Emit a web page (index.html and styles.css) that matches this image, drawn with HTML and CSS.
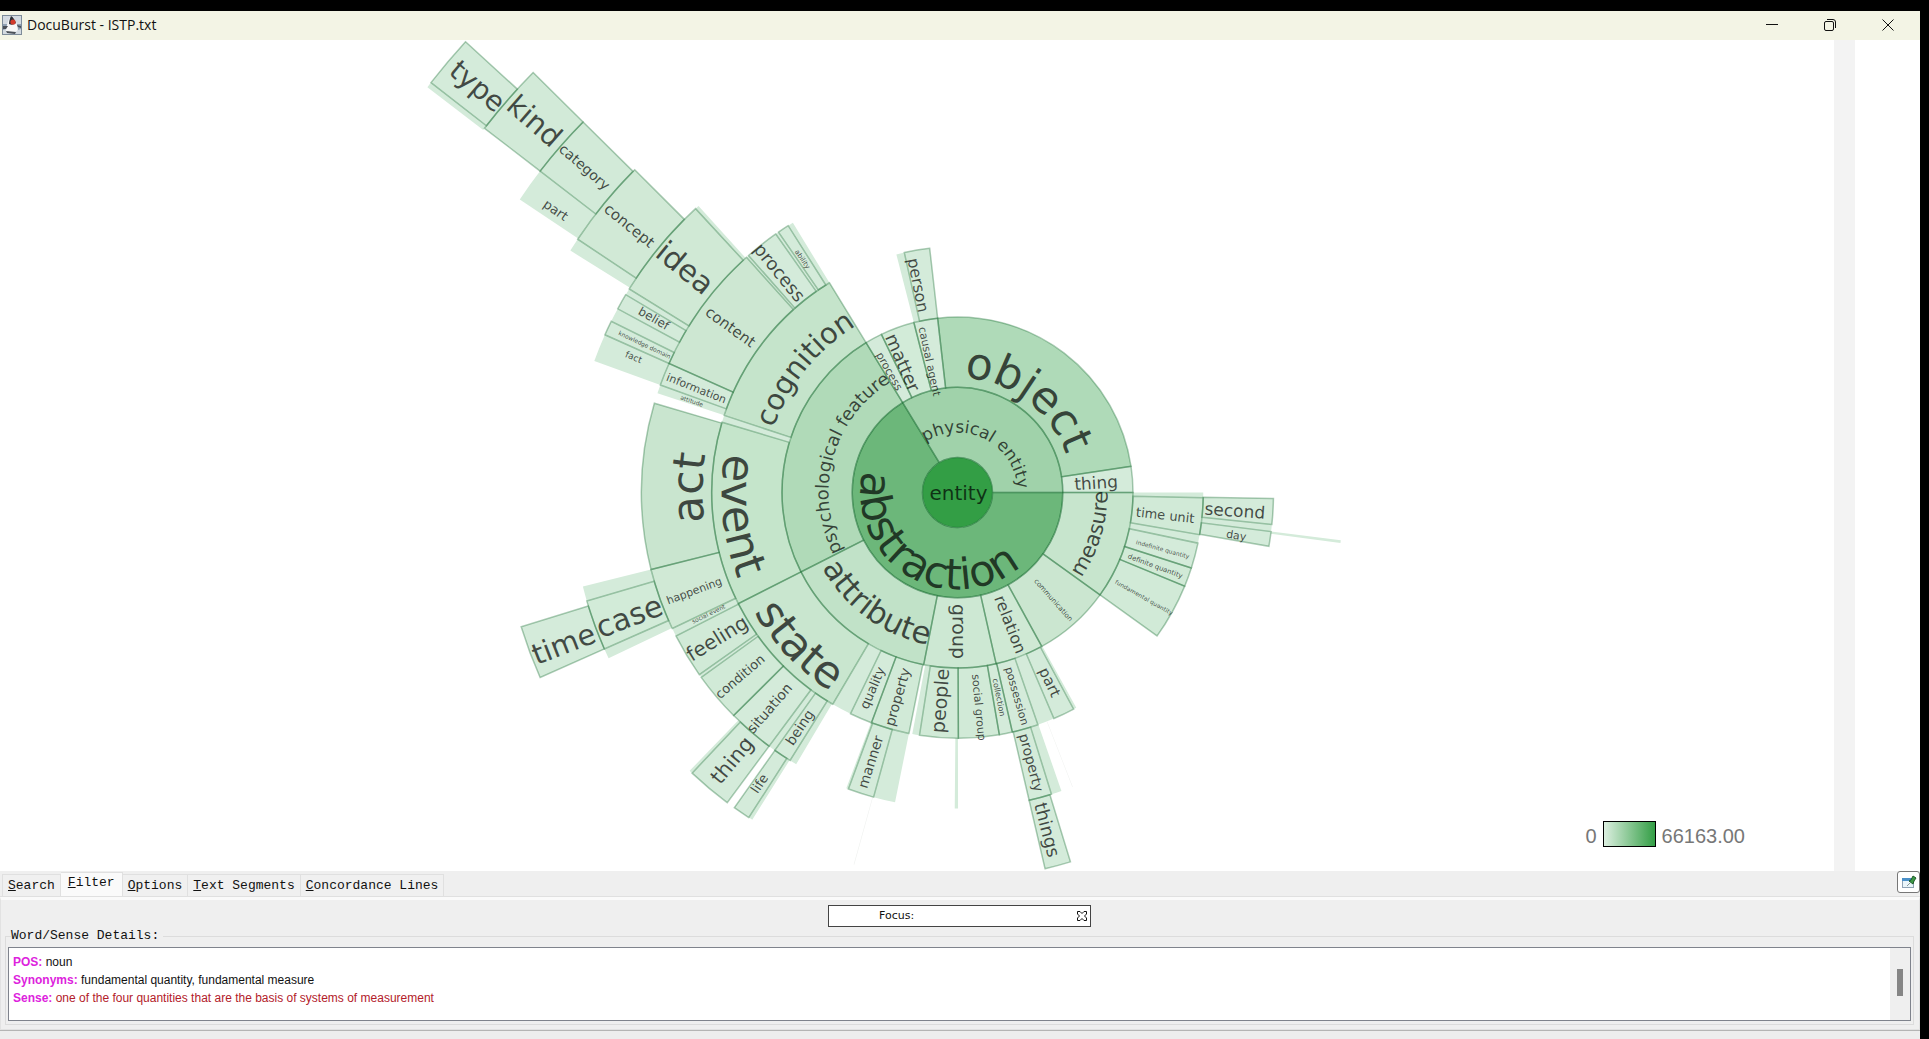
FILE: index.html
```html
<!DOCTYPE html>
<html lang="en">
<head>
<meta charset="utf-8">
<title>DocuBurst - ISTP.txt</title>
<link rel="stylesheet" href="styles.css">
</head>
<body>
<div class="window">
  <header class="titlebar">
    <svg class="app-icon" viewBox="0 0 20 20" aria-hidden="true">
      <rect x="0.5" y="0.5" width="19" height="19" fill="#d3dae1" stroke="#7d8b99"/>
      <path d="M1 9h6l-3 5-3 1zM14 9h5v5l-3 1z" fill="#8fa0b2"/>
      <path d="M9 1c3 1 5 5 6 9 1 3 1 5 0 6-2 2-8 3-11 1 0-5 2-12 5-16z" fill="#f7f7f7"/>
      <path d="M9 1c-1 2-2 5-2 8 2 1 5 1 7-1-1-3-3-6-5-7z" fill="#2b2f36"/>
      <path d="M1 11l5 0-2 3-3 0zM15 10l4 1 0 2-3-1zM4 16l10 1-1 2-8-1z" fill="#4a5058"/>
      <circle cx="11" cy="7" r="2.6" fill="#d33a2c"/>
    </svg>
    <h1 class="title">DocuBurst - ISTP.txt</h1>
    <div class="window-buttons">
      <button class="window-button" aria-label="Minimize"><svg viewBox="0 0 14 14"><path d="M1 6.500h12" /></svg></button>
      <button class="window-button" aria-label="Restore"><svg viewBox="0 0 14 14"><rect x="1.500" y="3.500" width="9" height="9" rx="1.500"/><path d="M4 1.500h6a2.500 2.500 0 0 1 2.500 2.500v6"/></svg></button>
      <button class="window-button" aria-label="Close"><svg viewBox="0 0 14 14"><path d="M1.500 1.500l11 11M12.500 1.500l-11 11"/></svg></button>
    </div>
  </header>

  <main class="stage">
    <div class="canvas">
      <svg id="burst" class="burst" viewBox="0 40 1834 831" role="img" aria-label="Word sunburst">
        <g id="sectors"></g>
        <g id="labels"></g>
      </svg>
      <div class="legend"><span>0</span><span class="legend-ramp"></span><span>66163.00</span></div>
    </div>
    <div class="track"></div>
    <div class="margin"></div>
  </main>

  <section class="panel">
    <div class="tab-row">
      <div class="tabs" role="tablist">
        <button class="tab" role="tab"><u>S</u>earch</button>
        <button class="tab tab-active" role="tab" aria-selected="true"><u>F</u>ilter</button>
        <button class="tab" role="tab"><u>O</u>ptions</button>
        <button class="tab" role="tab"><u>T</u>ext Segments</button>
        <button class="tab" role="tab"><u>C</u>oncordance Lines</button>
      </div>
      <button class="pin" aria-label="Detach panel">
        <svg viewBox="0 0 16 16">
          <rect x="1.500" y="4.500" width="11" height="9" fill="#eaf5fa" stroke="#8fa3b5"/>
          <rect x="1" y="4" width="12" height="3" fill="#4a90c8"/>
          <path d="M6 12l3-3" stroke="#8a9a9a"/>
          <path d="M8 7l2-1 2-4 3 2-2 3-1 3z" fill="#3d9a45" stroke="#1f5a2a"/>
        </svg>
      </button>
    </div>
    <div class="tab-body">
      <div class="focus">
        <label for="focus">Focus:</label>
        <input id="focus" type="text">
        <button class="clear" aria-label="Clear focus"><svg viewBox="0 0 12 12"><path d="M1.500 1.500h2.500l2 2 2-2h2.500v2.500l-2 2 2 2v2.500h-2.500l-2-2-2 2h-2.500v-2.500l2-2-2-2z"/></svg></button>
      </div>
      <fieldset class="details">
        <legend>Word/Sense Details:</legend>
        <div class="details-box">
          <div class="details-text">
            <p><b>POS:</b> noun</p>
            <p><b>Synonyms:</b> fundamental quantity, fundamental measure</p>
            <p class="sense"><b>Sense:</b> one of the four quantities that are the basis of systems of measurement</p>
          </div>
          <div class="scrollbar"><span class="thumb"></span></div>
        </div>
      </fieldset>
    </div>
    <footer class="status"></footer>
  </section>
</div>
<script src="burst.js"></script>
</body>
</html>
```

FILE: styles.css
```css
* { box-sizing: border-box; }

body {
  margin: 0;
  min-height: 100vh;
  display: flex;
  flex-direction: column;
  padding: 11px 9px 0 0;
  background: #000;
  color: #111;
  font-family: "Liberation Sans", Arial, sans-serif;
}

button { margin: 0; padding: 0; border: 0; background: none; font: inherit; color: inherit; }

.window { flex: 1; display: flex; flex-direction: column; background: #fff; }

.titlebar { display: flex; align-items: center; height: 29px; padding: 0 15px 2px 2px; background: #f3f4e5; }
.app-icon { width: 20px; height: 20px; margin-right: 5px; }
.title { margin: 0; font: 400 14px/20px "Open Sans", "Noto Sans", sans-serif; color: #111; }
.window-buttons { margin-left: auto; display: flex; gap: 24px; }
.window-button { width: 34px; height: 26px; display: grid; place-items: center; }
.window-button svg { width: 14px; height: 14px; fill: none; stroke: #111; }

.stage { flex: 1; display: flex; min-height: 0; }
.canvas { position: relative; flex: 1; min-width: 0; overflow: hidden; }
.burst { position: absolute; inset: 0; width: 100%; height: 100%; }
.track { width: 21px; background: #f3f3f3; }
.margin { width: 65px; }

.legend {
  position: absolute;
  right: 89px;
  bottom: 20px;
  display: flex;
  align-items: center;
  gap: 6px;
  font-size: 20px;
  line-height: 28px;
  color: #777;
}
.legend-ramp { width: 53px; height: 26px; margin-bottom: 4px; border: 1px solid #000; background: linear-gradient(90deg, #dcefe0, #339e45); }

.sector { fill: #d4ebda; }
.sector.line { stroke: rgb(20 105 45 / 35%); stroke-width: 1.5; }
.sector.hair { fill: #f0f2f0; }
.word { font-family: "DejaVu Sans", Verdana, sans-serif; fill: rgb(0 0 0 / 70%); text-anchor: middle; }

.panel { background: #efefef; }
.tab-row { display: flex; align-items: flex-end; height: 26px; padding-left: 2px; border-bottom: 1px solid #e0e0e0; }
.tabs { display: flex; align-items: flex-end; flex: 1; }
.tab {
  height: 22px;
  padding: 0 5px;
  border: 1px solid #e0e0e0;
  border-width: 1px 1px 0 0;
  background: #f0f0f0;
  font: 13px/20px "Liberation Mono", monospace;
}
.tab:first-child { border-left-width: 1px; }
.tab-active { height: 24px; padding: 0 7px 3px; background: #fafafa; }
.pin {
  width: 23px;
  height: 22px;
  margin-bottom: 3px;
  border: 1px solid #777;
  border-radius: 3px;
  background: #fff;
  display: grid;
  place-items: center;
}
.pin svg { width: 16px; height: 16px; }

.tab-body { padding: 5px 5px 4px 4px; border: 1px solid #e2e2e2; border-width: 0 1px 1px; border-top: 3px solid #fafafa; }
.focus {
  display: flex;
  align-items: center;
  width: 263px;
  height: 22px;
  margin: 0 auto;
  padding: 0 2px 0 50px;
  border: 1px solid #444;
  background: #fff;
  font: 11px/20px "DejaVu Sans", Verdana, sans-serif;
}
.focus input { flex: 1; min-width: 0; height: 18px; border: 0; padding: 0 4px; background: none; font: inherit; }
.clear { width: 12px; height: 16px; }
.clear svg { display: block; width: 12px; height: 12px; fill: #fff; stroke: #111; }

.details { margin: 0; padding: 2px 2px 3px; border: 1px solid #dcdcdc; }
.details legend { margin-left: 3px; padding: 0 4px 0 0; font: 13px/18px "Liberation Mono", monospace; }
.details-box { display: flex; height: 74px; border: 1px solid #7f838c; background: #fff; }
.details-text { flex: 1; padding: 5px 4px; font-size: 12px; line-height: 18px; color: #111; }
.details-text p { margin: 0; }
.details-text b { color: #dd22dd; }
.details-text .sense { color: #b3202a; }
.scrollbar { width: 20px; padding: 21px 7px; background: #efefef; }
.thumb { display: block; width: 6px; height: 27px; background: #868686; }

.status { height: 9px; border-top: 1px solid #b4b4b4; background: #ededed; }
```

FILE: burst.js
```js
// Radial word tree: every ring has the same depth, angles run counterclockwise from east.
const CX = 957.5, CY = 492.5, CORE = 35, RING = 70.25;
const NS = "http://www.w3.org/2000/svg";

// [ring, from, to, fill or null for the lightest tint, kind]; kind: 1 outlined, 0 plain, 2 hairline
const sectors = [
  [1, 0, 121.4, "#a0d2aa", 1], [1, 121.4, 360, "#6cb77a", 1],
  [2, 0, 8.6, null, 1], [2, 8.6, 96.5, "#afdab8", 1], [2, 96.5, 104.4, null, 1],
  [2, 104.4, 115.7, "#d2ebd8", 1], [2, 115.7, 121.4, null, 1],
  [2, 121.4, 206.9, "#b0dab8", 1], [2, 206.9, 258.9, "#c1e2c8", 1],
  [2, 258.9, 282.7, "#cde8d3", 1], [2, 282.7, 298.7, "#cfe9d4", 1],
  [2, 298.7, 324.3, "#cbe6d0", 1], [2, 324.3, 360, "#c7e5cd", 1],
  [3, 96.5, 102.5, null, 1], [3, 102.5, 104.4, null, 0],
  [3, 121.4, 161.7, "#c5e4cb", 1], [3, 161.7, 163.4, null, 0],
  [3, 163.4, 206.9, "#c5e5cb", 1], [3, 206.9, 239.5, "#c9e6cf", 1],
  [3, 239.5, 244.2, null, 0], [3, 244.2, 249.5, null, 1], [3, 249.5, 258.6, "#d1ead7", 1],
  [3, 259.4, 261.1, null, 0], [3, 261.1, 270.2, "#d1ead7", 1], [3, 270.2, 279.8, "#d1ead7", 1],
  [3, 279.8, 282.9, null, 1], [3, 282.9, 289.1, null, 1], [3, 289.1, 293.1, null, 0],
  [3, 293.1, 298.2, null, 1], [3, 298.2, 298.9, null, 0],
  [3, 324.3, 337.6, "#d1ead7", 1], [3, 337.6, 342.1, "#d1ead7", 1], [3, 342.1, 348.1, null, 1],
  [3, 348.1, 350.1, null, 0], [3, 350.1, 358.8, "#d1ead7", 1], [3, 358.8, 360, null, 0],
  [4, 121.4, 122.4, null, 0], [4, 122.4, 124.5, null, 1], [4, 124.5, 125.1, null, 0],
  [4, 125.1, 131.4, null, 1], [4, 131.4, 131.9, null, 0], [4, 131.9, 155.9, "#cde7d2", 1],
  [4, 155.9, 160.1, null, 1], [4, 160.1, 161.7, null, 0],
  [4, 163.6, 194.1, "#c9e5cf", 1], [4, 194.1, 205.5, "#d0e9d5", 1], [4, 205.5, 207, null, 0],
  [4, 207, 215.2, "#d1ead7", 1], [4, 215.2, 215.8, null, 0], [4, 215.8, 224.9, "#d1ead7", 1],
  [4, 224.9, 233.4, null, 1], [4, 233.4, 234.7, null, 0], [4, 234.7, 238, null, 1],
  [4, 238, 239.3, null, 0], [4, 249.4, 249.8, null, 0], [4, 249.8, 254.6, null, 1],
  [4, 254.6, 258.6, null, 0], [4, 269.5, 270.1, null, 0], [4, 283.1, 287.3, null, 1],
  [4, 287.3, 289.2, null, 0], [4, 291.3, 291.4, null, 2],
  [4, 350.2, 352.9, null, 1], [4, 352.9, 354.2, null, 0], [4, 354.2, 358.9, null, 1],
  [5, 132.1, 132.7, null, 0], [5, 132.7, 148.2, "#d0e9d5", 1], [5, 148.2, 149.2, null, 0],
  [5, 149.2, 151.6, null, 1], [5, 151.6, 153.7, null, 0], [5, 153.7, 155.9, null, 1],
  [5, 155.9, 160.1, null, 0], [5, 194.1, 196.3, null, 0], [5, 196.3, 203.9, "#d2ebd8", 1],
  [5, 203.9, 205.4, null, 0], [5, 226.1, 226.6, null, 0], [5, 226.6, 233.4, null, 1],
  [5, 234.7, 237.3, null, 1], [5, 237.3, 237.9, null, 0], [5, 254.4, 254.5, null, 2],
  [5, 283.1, 287, null, 1], [5, 352.5, 352.9, null, 0],
  [6, 135, 146.3, "#d1e9d6", 1], [6, 146.3, 148, null, 0], [6, 197.1, 203.9, null, 1],
  [7, 135.3, 142.4, "#d2ead8", 1], [7, 142.4, 146.2, null, 0],
  [8, 135.3, 142.4, "#d2ead8", 1],
  [9, 137.5, 142.1, null, 1], [9, 142.1, 142.6, null, 0]
];

// Words that follow an arc: [text, size, baseline radius, middle angle, direction]
const arcs = [
  ["physical entity", 17, 60, 63, "cw"], ["abstraction", 43, 97, 239, "ccw"],
  ["object", 44, 115, 53, "cw"], ["psychological feature", 18, 129, 164, "cw"],
  ["attribute", 31, 155, 234, "ccw"], ["cognition", 29, 195, 141, "cw"],
  ["event", 45, 236, 186, "ccw"], ["act", 44, 255, 179, "cw"],
  ["state", 44, 236, 224, "ccw"], ["measure", 21, 150, 343, "ccw"]
];

// Words that follow a spoke: [text, size, middle radius, angle]
const spokes = [
  ["process", 11, 139, 119.6], ["matter", 18, 141, 113.4], ["causal agent", 11, 134, 102.3],
  ["thing", 17, 139, 3.5], ["person", 16, 211, 101], ["group", 19, 139, 270.1],
  ["relation", 16, 142, 291.4], ["communication", 7, 144, 311.6], ["people", 19, 209, 265.6],
  ["social group", 11, 216, 275.5], ["collection", 8, 209, 281.3], ["possession", 11, 212, 286.1],
  ["part", 15, 211, 295.7], ["property", 14, 280, 285.1], ["things", 18, 349, 284.7],
  ["quality", 13, 213, 246.7], ["property", 14, 213, 253.9], ["manner", 14, 283, 252.3],
  ["happening", 11, 281, 200.6], ["social event", 6, 277, 206.1], ["feeling", 20, 281, 211.5],
  ["condition", 13, 285, 220.4], ["situation", 14, 286, 229.1], ["being", 14, 283, 236.3],
  ["thing", 21, 350, 230.1], ["life", 13, 352, 235.9], ["case", 30, 351, 201],
  ["time", 29, 422, 201.3], ["process", 18, 283, 129.2], ["ability", 7, 280, 123.7],
  ["content", 15, 281, 144.1], ["information", 11, 281, 158.4], ["attitude", 6, 281, 161.1],
  ["idea", 30, 353, 140.8], ["concept", 15, 423, 141], ["category", 14, 495, 139],
  ["kind", 29, 563, 138.9], ["type", 28, 629, 139.9], ["part", 13, 491, 145],
  ["belief", 12, 350, 150.3], ["knowledge domain", 6, 346, 154.8], ["fact", 9, 351, 157.4],
  ["time unit", 13, 209, 353.5], ["second", 17, 278, 356], ["day", 11, 282, 351.1],
  ["indefinite quantity", 6, 213, 344.4], ["definite quantity", 7, 211, 339.5],
  ["fundamental quantity", 6, 214, 330.5]
];

const sectorLayer = document.getElementById("sectors");
const labelLayer = document.getElementById("labels");

function add(parent, name, attrs, text) {
  const node = document.createElementNS(NS, name);
  for (const key in attrs) node.setAttribute(key, attrs[key]);
  if (text) node.textContent = text;
  parent.appendChild(node);
  return node;
}

function point(radius, degrees) {
  const t = degrees * Math.PI / 180;
  return (CX + radius * Math.cos(t)).toFixed(2) + " " + (CY - radius * Math.sin(t)).toFixed(2);
}

function drawSector([ring, from, to, fill, kind], outlineOnly) {
  const inner = CORE + (ring - 1) * RING, outer = inner + RING;
  const large = to - from > 180 ? 1 : 0;
  const d = `M${point(inner, from)}L${point(outer, from)}A${outer} ${outer} 0 ${large} 0 ${point(outer, to)}` +
    `L${point(inner, to)}A${inner} ${inner} 0 ${large} 1 ${point(inner, from)}Z`;
  const node = add(sectorLayer, "path", { d, class: "sector" + (outlineOnly ? " line" : kind === 2 ? " hair" : "") });
  if (outlineOnly) node.style.fill = "none";
  else if (fill) node.style.fill = fill;
}

// All fills go down before the outlines so that no neighbour hides half of an edge.
sectors.forEach(s => drawSector(s, false));
sectors.filter(s => s[4] === 1).forEach(s => drawSector(s, true));
const core = add(sectorLayer, "circle", { cx: CX, cy: CY, r: CORE, class: "sector line" });
core.style.fill = "#339e45";

arcs.forEach(([text, size, radius, middle, direction], i) => {
  const cw = direction === "cw";
  const start = cw ? middle + 85 : middle - 85, end = cw ? middle - 85 : middle + 85;
  add(labelLayer, "path", {
    id: "arc" + i, fill: "none",
    d: `M${point(radius, start)}A${radius} ${radius} 0 0 ${cw ? 1 : 0} ${point(radius, end)}`
  });
  const label = add(labelLayer, "text", { class: "word", "font-size": size });
  add(label, "textPath", { href: "#arc" + i, startOffset: "50%" }, text);
});

for (const [text, size, radius, angle] of spokes) {
  const leftSide = angle > 90 && angle < 270;
  const turn = leftSide ? 180 - angle : -angle;
  add(labelLayer, "text", {
    class: "word", "font-size": size, dy: "0.28em",
    transform: `translate(${point(radius, angle)}) rotate(${turn})`
  }, text);
}
add(labelLayer, "text", { class: "word", "font-size": 20, x: CX + 1, y: CY + 7 }, "entity");
```
